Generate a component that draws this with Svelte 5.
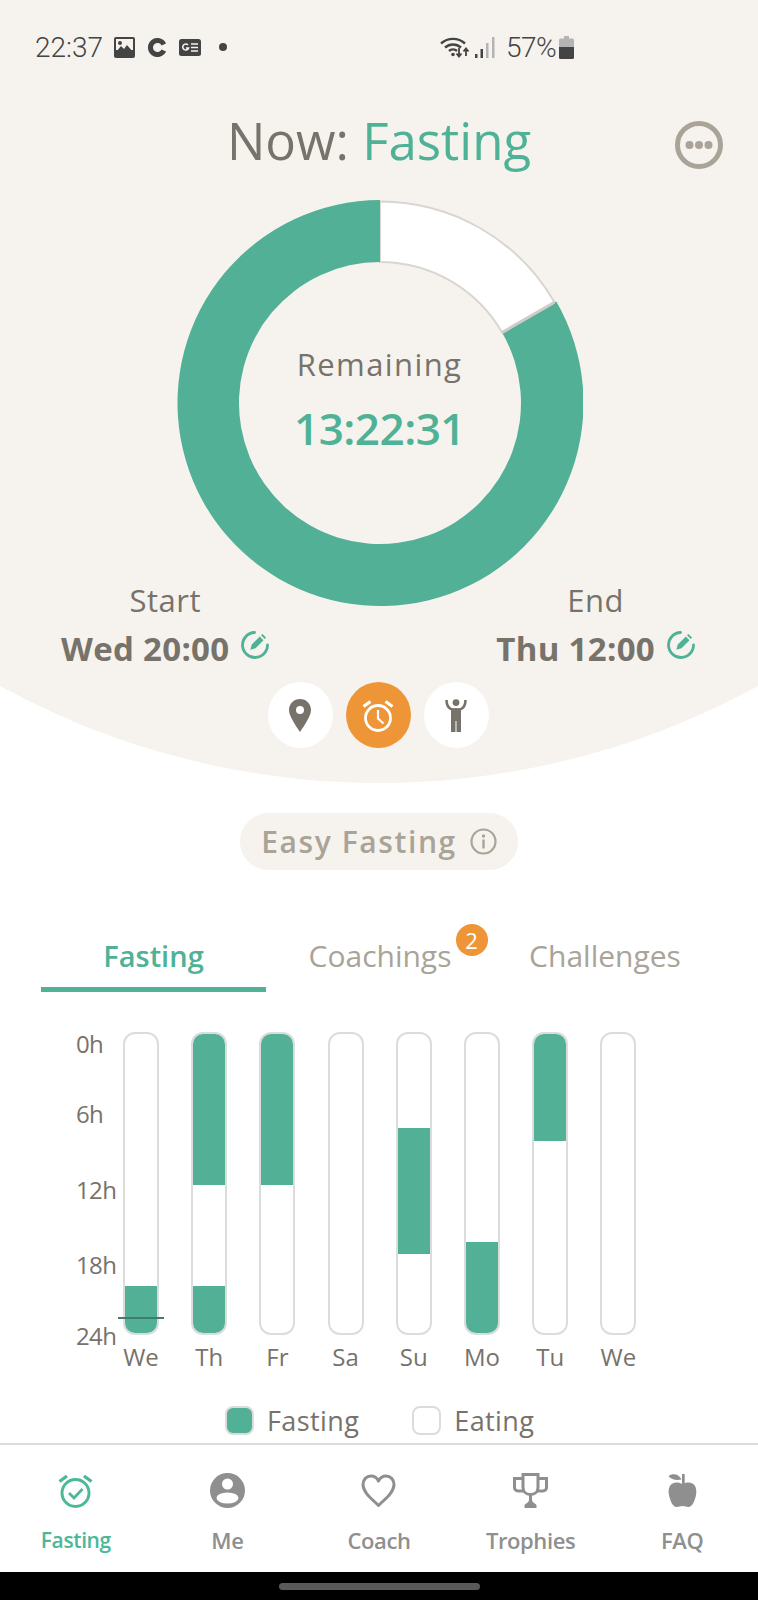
<script>
  const axis = ['0h', '6h', '12h', '18h', '24h'];

  // segments are [height in px, filled?] from the top of the bar
  const days = [
    { label: 'We', segs: [[252, false], [47, true]], now: true },
    { label: 'Th', segs: [[151, true], [101, false], [47, true]] },
    { label: 'Fr', segs: [[151, true], [148, false]] },
    { label: 'Sa', segs: [[299, false]] },
    { label: 'Su', segs: [[94, false], [126, true], [79, false]] },
    { label: 'Mo', segs: [[208, false], [91, true]] },
    { label: 'Tu', segs: [[107, true], [192, false]] },
    { label: 'We', segs: [[299, false]] }
  ];

  const tabs = ['Fasting', 'Coachings', 'Challenges'];
</script>

{#snippet editIcon()}
  <svg viewBox="0 0 28 28">
    <path d="M13.500 1.500A12.500 12.500 0 1 0 26.500 14" fill="none" stroke="#4fb296" stroke-width="2.800" stroke-linecap="round" />
    <path d="M9.300 18.700l1.500-5.200 8-8 3.700 3.700-8 8z" fill="#4fb296" />
    <path d="M20 4.300l1.400-1.400 3.700 3.700-1.400 1.400z" fill="#4fb296" />
  </svg>
{/snippet}

<div class="page">
  <header class="top">
    <div class="status">
      <div class="status-left">
        <span class="clock">22:37</span>
        <svg class="st-img" viewBox="0 0 21 21"><rect width="21" height="21" rx="2" fill="#444" /><rect x="2" y="2" width="17" height="11" fill="#f6f3ee" /><circle cx="6" cy="6" r="2" fill="#444" /><path d="M2 15l5-6 3 3 3-4 6 7v2H2z" fill="#444" /></svg>
        <svg class="st-c" viewBox="0 0 19 19"><path d="M15.800 6.500A7 7 0 1 0 15.800 12.500" fill="none" stroke="#444" stroke-width="5" /></svg>
        <svg class="st-g" viewBox="0 0 22 17"><rect width="22" height="17" rx="2.500" fill="#444" /><path d="M9 6a3 3 0 1 0 .6 3H7" fill="none" stroke="#f6f3ee" stroke-width="1.600" /><path d="M12 5h7M12 8.500h7M12 12h7" stroke="#f6f3ee" stroke-width="1.500" /></svg>
        <span class="st-dot"></span>
      </div>
      <div class="status-right">
        <svg class="st-wifi" viewBox="0 0 30 22"><g fill="none" stroke="#444" stroke-width="2.400"><path d="M1 7.500a18 18 0 0 1 24 0" /><path d="M5 11.500a12 12 0 0 1 16 0" /><path d="M9 15a6 6 0 0 1 8 0" /></g><circle cx="13" cy="18.500" r="1.800" fill="#444" /><path d="M19 12v8M16.500 17.500l2.500 3 2.500-3M26 20v-7M23.500 15.500l2.500-3 2.500 3" fill="none" stroke="#444" stroke-width="1.800" /></svg>
        <svg class="st-sig" viewBox="0 0 20 21"><rect x="0" y="17" width="2.500" height="4" fill="#444" /><rect x="5.500" y="12" width="2.500" height="9" fill="#444" /><rect x="11" y="6" width="2.500" height="15" fill="#b4b4b4" /><rect x="17" y="0" width="2.500" height="21" fill="#b4b4b4" /></svg>
        <span class="pct">57%</span>
        <svg class="st-bat" viewBox="0 0 15 23"><path d="M5 0h5v2.500h3.500a1.500 1.500 0 0 1 1.500 1.500v7H0V4a1.500 1.500 0 0 1 1.500-1.500H5z" fill="#b4b4b4" /><path d="M0 11h15v10.500a1.500 1.500 0 0 1-1.500 1.500h-12A1.500 1.500 0 0 1 0 21.500z" fill="#444" /></svg>
      </div>
    </div>

    <div class="title-row">
      <h1>Now: <em>Fasting</em></h1>
      <button class="more" aria-label="More">
        <svg viewBox="0 0 48 48"><circle cx="24" cy="24" r="21.500" fill="none" stroke="#a9a497" stroke-width="5" /><circle cx="14.500" cy="24" r="4" fill="#a9a497" /><circle cx="24" cy="24" r="4" fill="#a9a497" /><circle cx="33.500" cy="24" r="4" fill="#a9a497" /></svg>
      </button>
    </div>

    <div class="ring">
      <svg viewBox="0 0 406 406">
        <path d="M203 1.500A201.500 201.500 0 0 1 377.500 102.250L325.100 132.500A141 141 0 0 0 203 62z" fill="#fff" stroke="#d9d6d2" stroke-width="2" />
        <path d="M379.300 101.500A203 203 0 1 1 203 0V62A141 141 0 1 0 325.100 132.500z" fill="#52b096" />
        <path d="M377.500 102.250L325.100 132.500" stroke="#d0cdc9" stroke-width="3" />
      </svg>
      <div class="ring-text">
        <span class="rem">Remaining</span>
        <strong>13:22:31</strong>
      </div>
    </div>

    <div class="times">
      <div class="time">
        <span class="t-label">Start</span>
        <div class="t-value">
          <b>Wed 20:00</b>
          {@render editIcon()}
        </div>
      </div>
      <div class="time">
        <span class="t-label">End</span>
        <div class="t-value">
          <b>Thu 12:00</b>
          {@render editIcon()}
        </div>
      </div>
    </div>

    <div class="modes">
      <button class="mode" aria-label="Location">
        <svg viewBox="0 0 22 33"><path fill-rule="evenodd" d="M11 0C4.900 0 0 4.900 0 11c0 6 7 16 11 22 4-6 11-16 11-22C22 4.900 17.100 0 11 0zm0 7a4 4 0 1 1 0 8 4 4 0 0 1 0-8z" fill="#77726a" /></svg>
      </button>
      <button class="mode active" aria-label="Alarm">
        <svg viewBox="0 0 32 33"><g fill="none" stroke="#fff"><circle cx="16" cy="19" r="12.500" stroke-width="2.800" /><path d="M16 11v8.500l5.500 5" stroke-width="2.200" /><path d="M1.500 7.500l7-5M30.500 7.500l-7-5" stroke-width="3.200" /></g></svg>
      </button>
      <button class="mode" aria-label="Body">
        <svg viewBox="0 0 22 33">
          <circle cx="11" cy="3.600" r="3.400" fill="#77726a" />
          <path d="M1.500 1C1.500 6 4 9.500 7 10.500H15C18 9.500 20.500 6 20.500 1" fill="none" stroke="#77726a" stroke-width="2.600" />
          <path d="M6 9.500h10V33h-4.500V22h-1v11H6z" fill="#77726a" />
        </svg>
      </button>
    </div>
  </header>

  <div class="pill-row">
    <div class="pill">
      <span>Easy Fasting</span>
      <svg viewBox="0 0 27 27"><circle cx="13.500" cy="13.500" r="12" fill="none" stroke="#a9a497" stroke-width="2.200" /><circle cx="13.500" cy="8" r="1.700" fill="#a9a497" /><rect x="12.300" y="11.500" width="2.400" height="9" fill="#a9a497" /></svg>
    </div>
  </div>

  <nav class="tabs">
    {#each tabs as tab, i}
      <div class="tab" class:on={i === 0}>
        <span class="tab-text">
          {tab}
          {#if tab === 'Coachings'}<i class="badge">2</i>{/if}
        </span>
      </div>
    {/each}
  </nav>

  <section class="chart">
    <div class="axis">
      {#each axis as a}<span>{a}</span>{/each}
    </div>
    <div class="bars">
      {#each days as d}
        <div class="day">
          <div class="bar">
            {#each d.segs as s}
              <div class="seg" class:fill={s[1]} style="height: {s[0]}px"></div>
            {/each}
          </div>
          {#if d.now}<div class="now"></div>{/if}
          <span class="d-label">{d.label}</span>
        </div>
      {/each}
    </div>
  </section>

  <div class="legend">
    <span class="swatch fill"></span><span class="l-text">Fasting</span>
    <span class="swatch gap"></span><span class="l-text">Eating</span>
  </div>

  <footer class="nav">
    <div class="nav-item on">
      <svg viewBox="0 0 34 35"><g fill="none" stroke="#4cb898"><circle cx="17" cy="20" r="13.500" stroke-width="3" /><path d="M10.500 20l5 5 8.500-9" stroke-width="2.800" /><path d="M1 8.500l7.500-5.500M33 8.500L25.500 3" stroke-width="3.400" /></g></svg>
      <span>Fasting</span>
    </div>
    <div class="nav-item">
      <svg viewBox="0 0 35 35"><circle cx="17.500" cy="17.500" r="17.500" fill="#8f8f8f" /><circle cx="17.500" cy="11" r="5.500" fill="#fff" /><ellipse cx="17.500" cy="25" rx="11" ry="5.500" fill="#fff" /></svg>
      <span>Me</span>
    </div>
    <div class="nav-item">
      <svg viewBox="0 0 35 35"><path d="M17.500 32.500C11 26 2 19.500 2 11.500 2 6.500 5.500 3 10 3c3.200 0 5.800 1.700 7.500 5C19.200 4.700 21.800 3 25 3c4.500 0 8 3.500 8 8.500 0 8-9 14.500-15.500 21z" fill="none" stroke="#8f8f8f" stroke-width="3" stroke-linejoin="round" /></svg>
      <span>Coach</span>
    </div>
    <div class="nav-item">
      <svg viewBox="0 0 35 35"><g fill="none" stroke="#8f8f8f" stroke-width="3"><path d="M10 1.500h15v13c0 4-3 7-7.500 7s-7.500-3-7.500-7z" /><path d="M10 5.500H1.500v9c0 2 1.500 3.500 3.500 3.500h6M25 5.500h8.500v9c0 2-1.500 3.500-3.500 3.500h-6" /></g><path d="M16 21h3v6c0 2 3 3.500 4.500 5v3h-12v-3c1.500-1.500 4.500-3 4.500-5z" fill="#8f8f8f" /></svg>
      <span>Trophies</span>
    </div>
    <div class="nav-item">
      <svg viewBox="0 0 35 35"><path d="M17.500 11c-3-1.700-7-2.300-10-.5-3.200 2-4.500 6-3.500 11.500 1 5 3.500 12 7.500 12 2.500 0 3.500-1 6-1s3.500 1 6 1c4 0 6.500-7 7.500-12 1-5.500-.3-9.500-3.500-11.500-3-1.800-7-1.200-10 .5z" fill="#8f8f8f" /><rect x="17" y="1" width="2.700" height="10" fill="#8f8f8f" /><path d="M16.500 6.500C12 7.500 6 7 3.500 3 7 0 14 .5 16.500 6.500z" fill="#8f8f8f" /></svg>
      <span>FAQ</span>
    </div>
  </footer>

  <div class="home"><span></span></div>
</div>

<style>
  :global(body) {
    margin: 0;
    background: #fff;
  }

  .page {
    width: 758px;
    height: 1600px;
    overflow: hidden;
    display: flex;
    flex-direction: column;
    font-family: 'Open Sans', 'Noto Sans', sans-serif;
    font-stretch: 88%;
    color: #77726a;
  }

  button {
    border: 0;
    padding: 0;
    background: none;
    display: flex;
    align-items: center;
    justify-content: center;
  }

  svg {
    display: block;
    flex: none;
  }

  .top {
    height: 783px;
    flex: none;
    background: #f6f3ee;
    clip-path: circle(789px at 379px -6px);
  }

  .status {
    height: 94px;
    display: flex;
    align-items: center;
    justify-content: space-between;
    padding: 0 184px 0 35px;
    box-sizing: border-box;
    color: #444;
    font-family: Roboto, sans-serif;
    font-size: 28px;
    font-weight: 300;
    font-stretch: normal;
  }

  .status-left,
  .status-right {
    display: flex;
    align-items: center;
  }

  .clock {
    width: 79px;
  }

  .st-img {
    width: 21px;
    height: 21px;
    margin-right: 13px;
  }

  .st-c {
    width: 19px;
    height: 19px;
    margin-right: 12px;
  }

  .st-g {
    width: 22px;
    height: 17px;
    margin-right: 18px;
  }

  .st-dot {
    width: 8px;
    height: 8px;
    border-radius: 50%;
    background: #444;
  }

  .st-wifi {
    width: 30px;
    height: 22px;
    margin-right: 5px;
  }

  .st-sig {
    width: 20px;
    height: 21px;
    margin-right: 11px;
  }

  .pct {
    width: 53px;
    letter-spacing: -0.5px;
  }

  .st-bat {
    width: 15px;
    height: 23px;
  }

  .title-row {
    position: relative;
    height: 92px;
    display: flex;
    align-items: center;
    justify-content: center;
  }

  h1 {
    margin: 0;
    font-size: 51px;
    font-weight: 400;
    line-height: 60px;
  }

  h1 em {
    font-style: normal;
    color: #4fb296;
  }

  .more {
    position: absolute;
    right: 35px;
    top: 27px;
    width: 48px;
    height: 48px;
  }

  .more svg {
    width: 48px;
    height: 48px;
  }

  .ring {
    position: relative;
    width: 406px;
    height: 406px;
    margin: 14px 0 0 176.5px;
  }

  .ring svg {
    width: 406px;
    height: 406px;
  }

  .ring-text {
    position: absolute;
    inset: 0;
    display: flex;
    flex-direction: column;
    align-items: center;
    padding-top: 141px;
    box-sizing: border-box;
  }

  .rem {
    font-size: 31px;
    line-height: 46px;
    letter-spacing: 1.4px;
  }

  .ring-text strong {
    font-size: 44px;
    line-height: 62px;
    margin-top: 10px;
    font-weight: 600;
    color: #4fb296;
    letter-spacing: -0.5px;
  }

  .times {
    display: flex;
    justify-content: space-between;
    padding: 0 63px 0 61px;
    margin-top: -28px;
    position: relative;
  }

  .time {
    display: flex;
    flex-direction: column;
    align-items: center;
  }

  .t-label {
    font-size: 31px;
    line-height: 44px;
    letter-spacing: 0.5px;
  }

  .t-value {
    display: flex;
    align-items: flex-start;
    gap: 12px;
    margin-top: 4px;
  }

  .t-value b {
    font-size: 33px;
    line-height: 46px;
    font-weight: 700;
    letter-spacing: 0.3px;
  }

  .t-value svg {
    width: 28px;
    height: 28px;
    margin-top: 5px;
  }

  .modes {
    display: flex;
    justify-content: center;
    gap: 13px;
    margin: 10px 2px 0 0;
  }

  .mode {
    width: 65px;
    height: 66px;
    border-radius: 50%;
    background: #fff;
  }

  .mode svg {
    width: 22px;
    height: 33px;
  }

  .mode.active {
    background: #ee9537;
  }

  .mode.active svg {
    width: 32px;
  }

  .pill-row {
    display: flex;
    justify-content: center;
    margin-top: 30px;
  }

  .pill {
    width: 278px;
    height: 57px;
    border-radius: 29px;
    background: #f6f3ee;
    display: flex;
    align-items: center;
    justify-content: center;
    gap: 13px;
    color: #a9a497;
    font-size: 30px;
    font-weight: 600;
    letter-spacing: 1.6px;
  }

  .pill svg {
    width: 27px;
    height: 27px;
  }

  .tabs {
    display: flex;
    padding: 0 41px;
    margin-top: 34px;
    height: 88px;
    box-sizing: border-box;
  }

  .tab {
    width: 225px;
    height: 88px;
    display: flex;
    justify-content: center;
    padding: 30px 0 0 3px;
    box-sizing: border-box;
    color: #a9a497;
    font-size: 30px;
    line-height: 44px;
  }

  .tab.on {
    color: #4fb296;
    font-size: 29px;
    font-weight: 600;
    padding-left: 0;
    border-bottom: 5px solid #4fb296;
  }

  .tab-text {
    position: relative;
  }

  .badge {
    position: absolute;
    left: 147px;
    top: -10px;
    width: 32px;
    height: 32px;
    border-radius: 50%;
    background: #ee9537;
    color: #fff;
    font-style: normal;
    font-size: 22px;
    line-height: 32px;
    text-align: center;
  }

  .chart {
    display: flex;
    margin-top: 40px;
    padding-left: 76px;
  }

  .axis {
    width: 47px;
    height: 320px;
    display: grid;
    grid-template-rows: 70px 76px 75px 71px 27px;
    font-size: 24px;
    line-height: 24px;
    letter-spacing: -0.6px;
  }

  .bars {
    display: flex;
    gap: 32.2px;
  }

  .day {
    position: relative;
    width: 36px;
    display: flex;
    flex-direction: column;
    align-items: center;
  }

  .bar {
    width: 36px;
    height: 303px;
    box-sizing: border-box;
    border: 2px solid #dcdcdc;
    border-radius: 12px;
    overflow: hidden;
    background: #fff;
  }

  .seg.fill {
    background: #52b096;
  }

  .now {
    position: absolute;
    left: -5px;
    top: 285px;
    width: 46px;
    height: 2px;
    background: #3e7c6c;
  }

  .d-label {
    font-size: 24px;
    line-height: 34px;
    margin-top: 5px;
  }

  .legend {
    display: flex;
    align-items: center;
    padding-left: 225px;
    margin-top: 31px;
    height: 30px;
    font-size: 27px;
    letter-spacing: 0.4px;
  }

  .swatch {
    width: 29px;
    height: 29px;
    box-sizing: border-box;
    border: 2px solid #dcdcdc;
    border-radius: 8px;
  }

  .swatch.fill {
    background: #52b096;
  }

  .swatch.gap {
    margin-left: 53px;
  }

  .l-text {
    margin-left: 13px;
  }

  .nav {
    margin-top: auto;
    height: 129px;
    flex: none;
    box-sizing: border-box;
    border-top: 2px solid #dcdcdc;
    display: grid;
    grid-template-columns: repeat(5, 1fr);
    color: #8f8f8f;
  }

  .nav-item {
    display: flex;
    flex-direction: column;
    align-items: center;
    padding-top: 28px;
    font-size: 22px;
    font-weight: 600;
    line-height: 32px;
    letter-spacing: -0.4px;
  }

  .nav-item svg {
    width: 35px;
    height: 35px;
    margin-bottom: 16px;
  }

  .nav-item.on {
    color: #4cb898;
    font-size: 21px;
  }

  .home {
    height: 28px;
    flex: none;
    background: #000;
    display: flex;
    justify-content: center;
    padding-top: 11px;
    box-sizing: border-box;
  }

  .home span {
    width: 201px;
    height: 7px;
    border-radius: 4px;
    background: #5a5a5a;
  }
</style>
